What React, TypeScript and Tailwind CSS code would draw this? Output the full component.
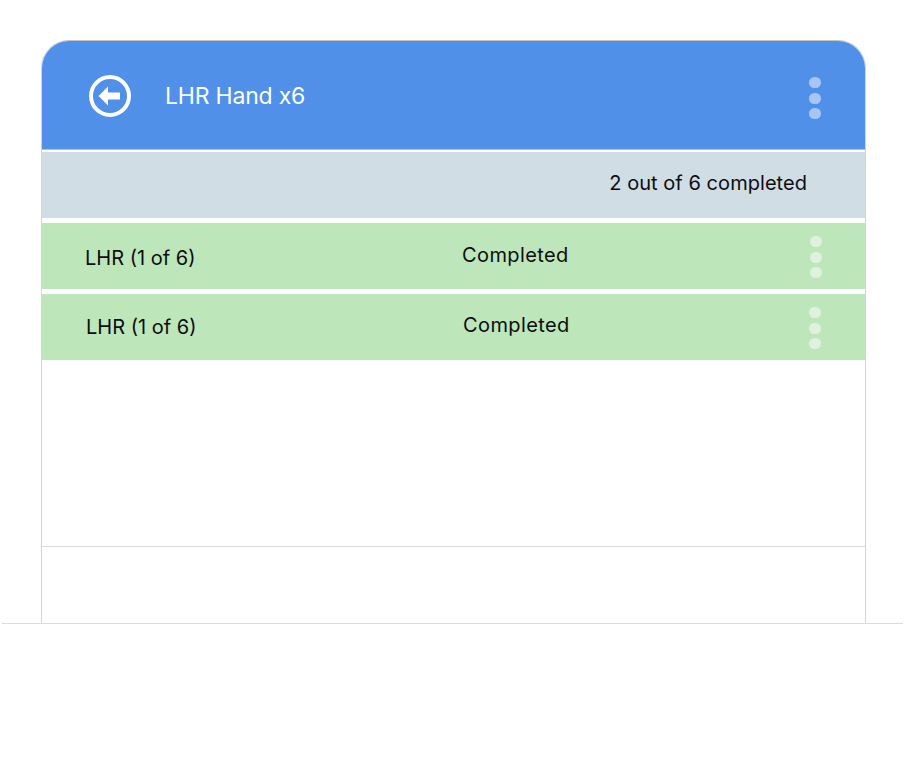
const Dots = ({ className }: { className: string }) => (
  <div className="flex flex-col items-center gap-[4.5px]">
    <span className={`block w-3 h-[11px] rounded-full ${className}`} />
    <span className={`block w-3 h-[11px] rounded-full ${className}`} />
    <span className={`block w-3 h-[11px] rounded-full ${className}`} />
  </div>
);

const BackIcon = () => (
  <svg width="44" height="44" viewBox="0 0 44 44" fill="none">
    <circle cx="22" cy="22" r="19" stroke="#fff" strokeWidth="4" />
    <path d="M10.5 22 L20 12.5 V18.5 H32 V25.5 H20 V31.5 Z" fill="#fff" />
  </svg>
);

const rows = [
  { label: "pl-[44px] pt-[25px] w-[421px]", status: "pt-[22px]", dots: "pr-[43px] pt-[13px]" },
  { label: "pl-[45px] pt-[23px] w-[422px]", status: "pt-[21px]", dots: "pr-[44px] pt-[13px]" },
];

export default function App() {
  return (
    <div className="h-[768px] bg-white overflow-hidden font-['Inter',sans-serif] text-[#0d0d0d]">
      <div className="h-[624px] mx-[2px] w-[901px] pt-10 border-b border-[#dcdcdc]">
        <div className="ml-[39px] w-[825px] h-full rounded-t-[28px] border-x border-t border-[#d4d4d4] border-t-[#c4c4c4] flex flex-col">
          <div className="h-[109px] bg-[#5190e9] rounded-t-[27px] border-b border-[#a9c4ee] flex items-center pt-[2px] pl-[46px] pr-[44px]">
            <BackIcon />
            <span className="ml-[33px] text-[23px] leading-none text-white tracking-[-0.2px]">LHR Hand x6</span>
            <div className="ml-auto mt-[4px]">
              <Dots className="bg-[#a8c6f3]" />
            </div>
          </div>
          <div className="mt-[2px] h-[66px] bg-[#d1dde5] flex items-center justify-end pr-[58px]">
            <span className="text-[20px] leading-none tracking-[0.05px] -mt-[4px]">2 out of 6 completed</span>
          </div>
          {rows.map((row, i) => (
            <div key={i} className="mt-[5px] h-[66px] -ml-px bg-[#bde6bb] flex items-start">
              <span className={`${row.label} text-[20px] leading-none shrink-0`}>LHR (1 of 6)</span>
              <span className={`${row.status} text-[20px] leading-none tracking-[0.4px]`}>Completed</span>
              <div className={`ml-auto ${row.dots}`}>
                <Dots className="bg-[#def2dd]" />
              </div>
            </div>
          ))}
          <div className="mt-[186px] border-b border-[#dcdcdc]" />
        </div>
      </div>
    </div>
  );
}
